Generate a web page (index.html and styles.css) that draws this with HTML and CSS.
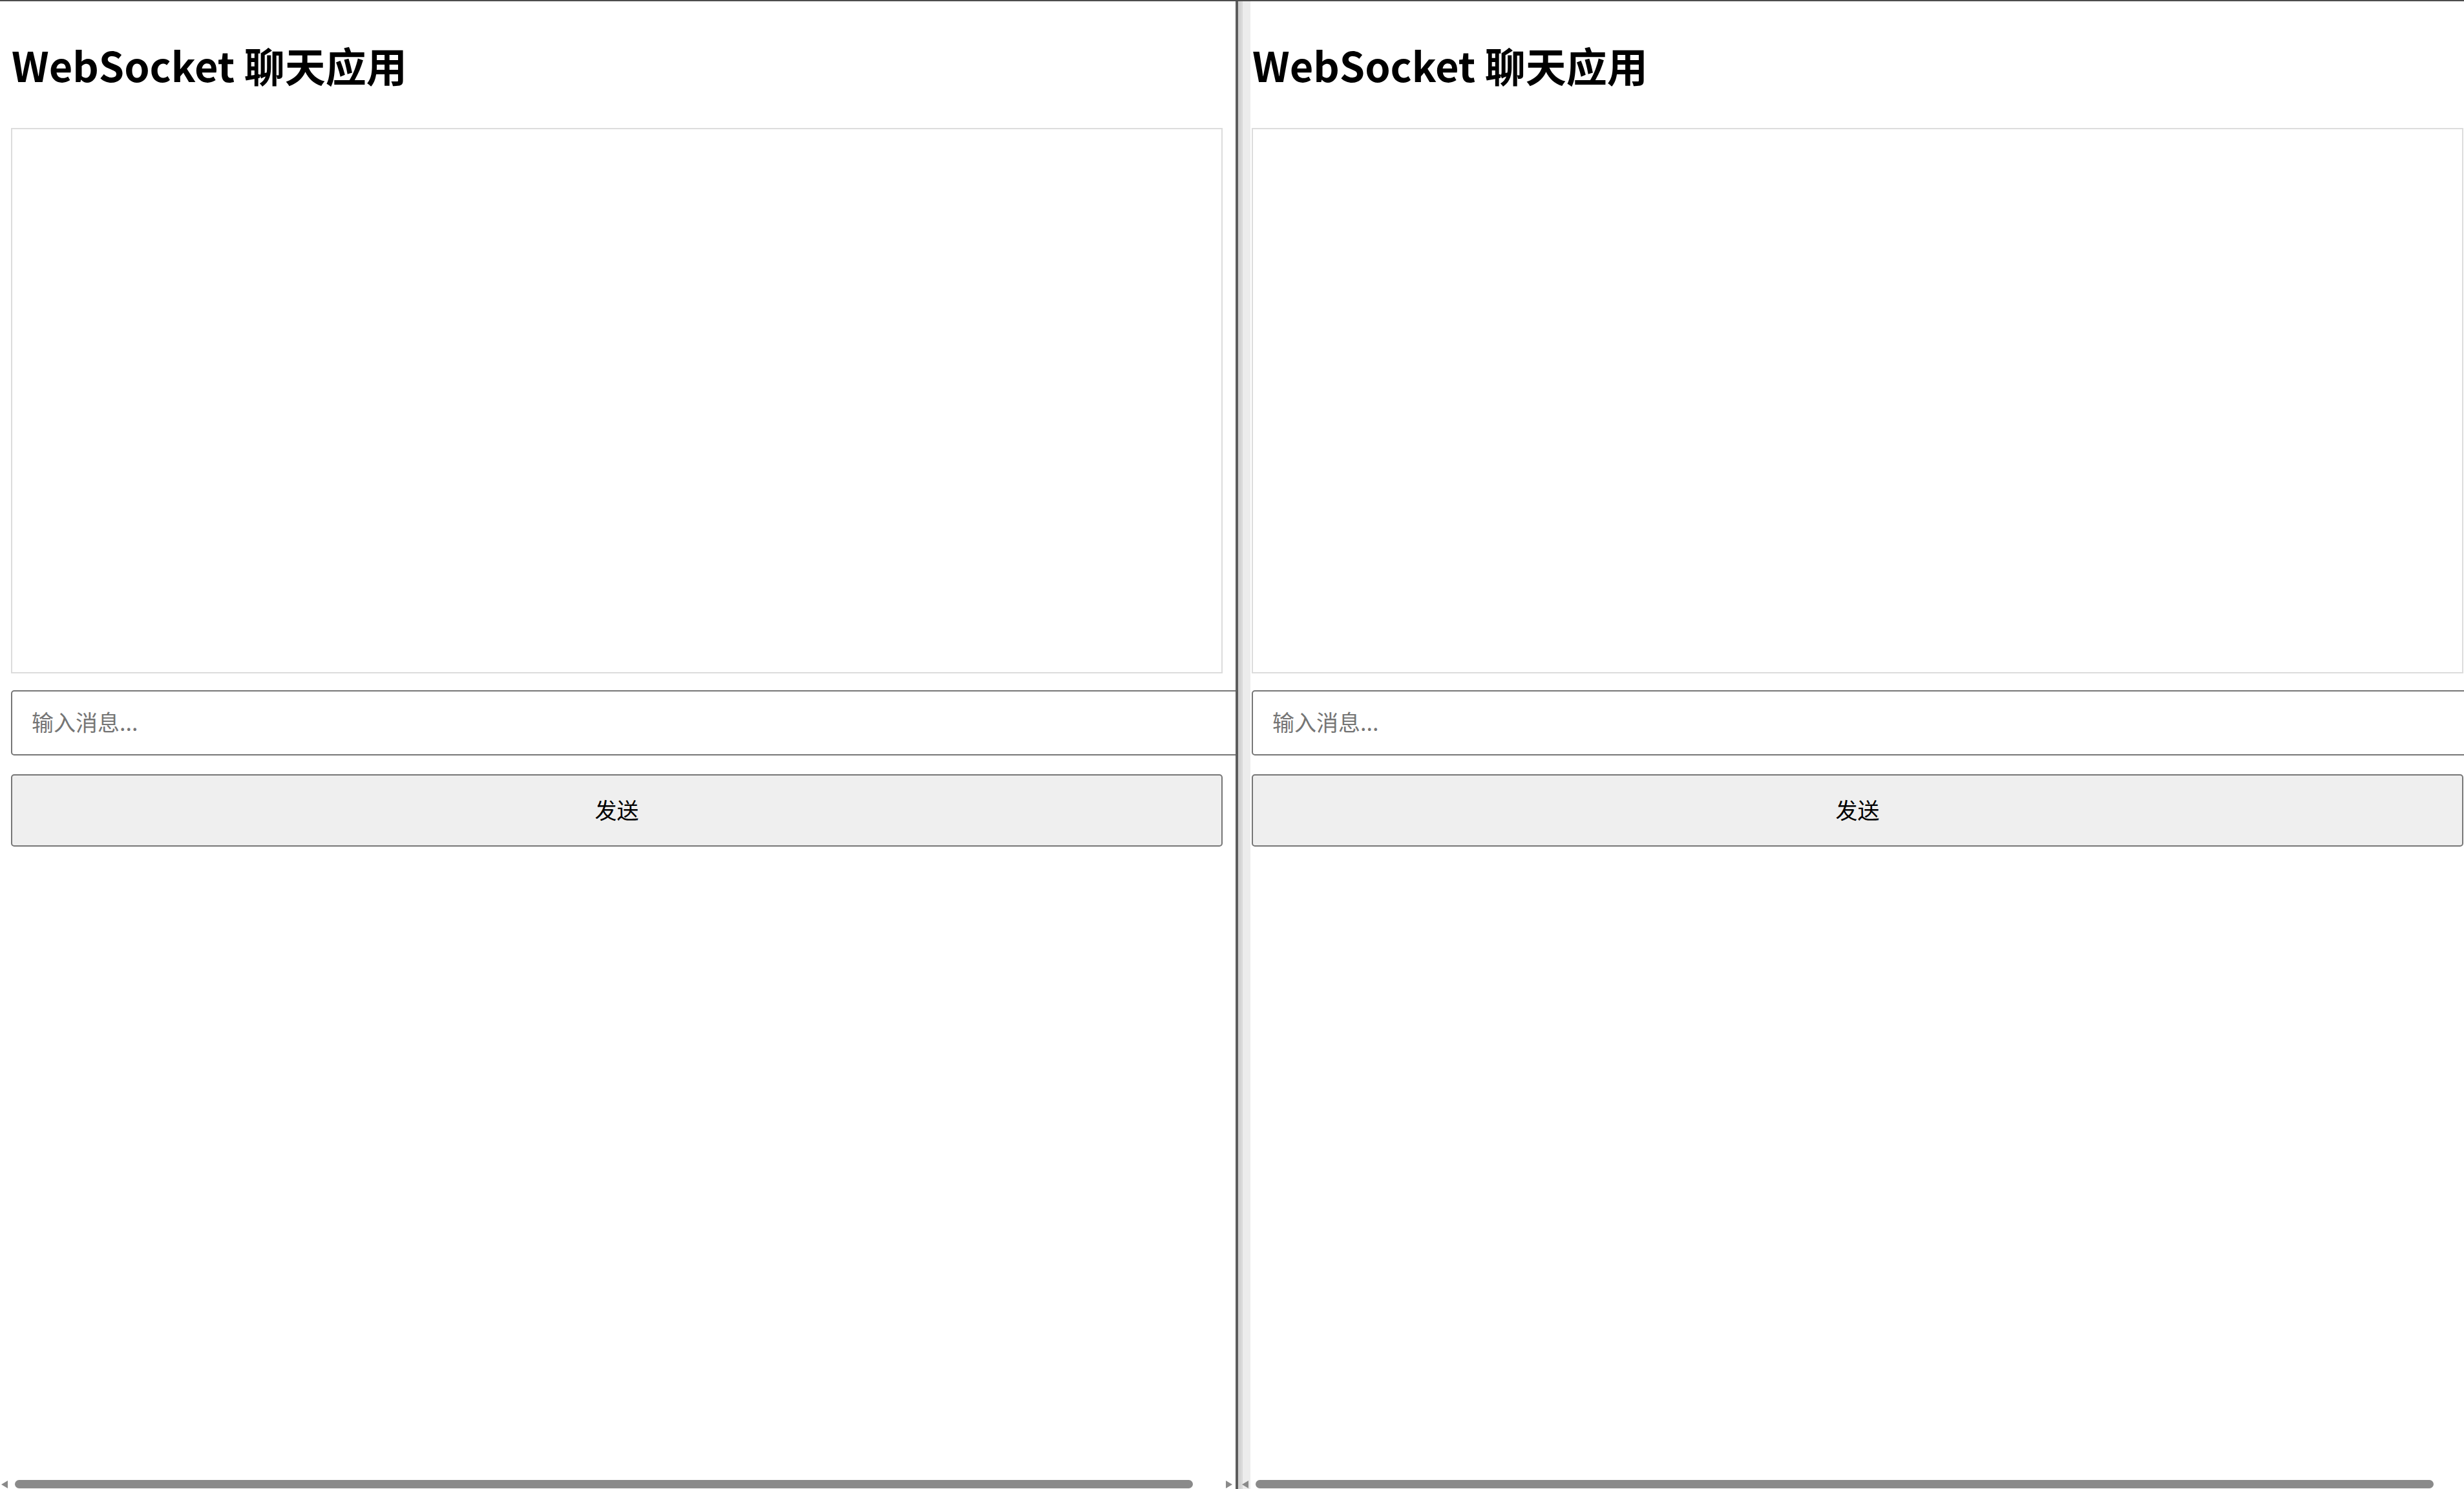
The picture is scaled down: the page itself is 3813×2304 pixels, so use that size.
FILE: index.html
```html
<!DOCTYPE html>
<html lang="zh-CN">
<head>
<meta charset="utf-8">
<title>WebSocket 聊天应用</title>
<link rel="stylesheet" href="styles.css">
</head>
<body>
<div class="topline"></div>
<div class="split">
  <section class="pane">
    <div class="pane-body">
      <h1 class="title">WebSocket 聊天应用</h1>
      <div class="messages"></div>
      <input class="msg-input" type="text" placeholder="输入消息...">
      <button class="send" type="button">发送</button>
    </div>
    <div class="hscroll">
      <span class="arrow arrow-left"></span>
      <span class="thumb"></span>
      <span class="arrow arrow-right"></span>
    </div>
  </section>
  <div class="divider"></div>
  <section class="pane pane-right">
    <div class="pane-body">
      <h1 class="title">WebSocket 聊天应用</h1>
      <div class="messages"></div>
      <input class="msg-input" type="text" placeholder="输入消息...">
      <button class="send" type="button">发送</button>
    </div>
    <div class="hscroll">
      <span class="arrow arrow-left"></span>
      <span class="thumb"></span>
      <span class="arrow arrow-right"></span>
    </div>
  </section>
</div>
</body>
</html>
```
FILE: styles.css
```css
html, body {
  margin: 0;
  padding: 0;
  height: 100%;
}
body {
  overflow: hidden;
  background: #ffffff;
  font-family: "Noto Sans CJK SC", "Noto Sans", sans-serif;
  color: #000;
}
.topline {
  height: 2px;
  background: #4d4d4d;
}
.split {
  display: flex;
  height: 2302px;
}
.pane {
  flex: 0 0 1912px;
  width: 1912px;
  display: flex;
  flex-direction: column;
  overflow: hidden;
  background: #ffffff;
}
.pane-right {
  background: linear-gradient(to right, #d9d9d9 0 3px, #ececec 3px 15px, #ffffff 15px);
}
.divider {
  flex: 0 0 8px;
  background: linear-gradient(to right, #5c5c5c 0 4px, #d2d2d2 4px 8px);
}
.pane-body {
  padding: 48px 0 0 17px;
}
.title {
  margin: 0 0 48px 1px;
  font-size: 63px;
  line-height: 100px;
  font-weight: 700;
  white-space: nowrap;
}
.messages {
  box-sizing: border-box;
  width: 1875px;
  height: 844px;
  border: 2px solid #dcdcdc;
  background: #ffffff;
}
.msg-input {
  display: block;
  box-sizing: border-box;
  width: 1940px;
  height: 101px;
  margin: 26px 0 0;
  padding: 0 30px 4px;
  border: 2px solid #767676;
  border-radius: 5px;
  background: #ffffff;
  font-family: "Noto Sans CJK SC", "Noto Sans", sans-serif;
  font-size: 34px;
  color: #000;
  outline: none;
}
.msg-input::placeholder {
  color: #757575;
}
.send {
  display: block;
  box-sizing: border-box;
  width: 1875px;
  height: 112px;
  margin: 29px 0 0;
  padding: 0 0 4px;
  border: 2px solid #767676;
  border-radius: 5px;
  background: #efefef;
  font-family: "Noto Sans CJK SC", "Noto Sans", sans-serif;
  font-size: 34px;
  color: #000;
}
.hscroll {
  margin-top: auto;
  height: 16px;
  display: flex;
  align-items: flex-end;
  padding: 0 5px 1px 2px;
}
.arrow {
  width: 0;
  height: 0;
  border-top: 6.5px solid transparent;
  border-bottom: 6.5px solid transparent;
}
.arrow-left {
  border-right: 10px solid #8a8a8a;
}
.arrow-right {
  border-left: 10px solid #8a8a8a;
}
.thumb {
  flex: 0 0 1823px;
  height: 13px;
  margin: 0 51px 0 11px;
  border-radius: 7px;
  background: #8a8a8a;
}
```
